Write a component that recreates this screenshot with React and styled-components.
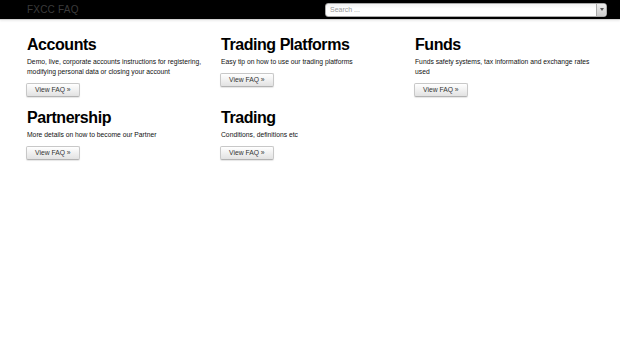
import React from "react";
import styled, { createGlobalStyle } from "styled-components";

const Global = createGlobalStyle`
  html, body { margin: 0; padding: 0; background: #fff; }
  body { font-family: "Liberation Sans", Arial, Helvetica, sans-serif; color: #000; }
`;

const Navbar = styled.div`
  height: 19px;
  background: #000;
  border-bottom: 1px solid #d4d4d4;
  box-shadow: 0 1px 2px rgba(0,0,0,0.08);
  display: flex;
  align-items: center;
  justify-content: space-between;
  padding: 0 13px 0 27px;
`;

const Brand = styled.div`
  font-size: 10px;
  color: #3b3b3b;
  letter-spacing: 0.2px;
`;

const SearchBox = styled.div`
  width: 282px;
  height: 14px;
  box-sizing: border-box;
  background: linear-gradient(#f2f2f2, #fff 40%);
  border: 1px solid #aaa;
  border-radius: 3px;
  display: flex;
  align-items: center;
  justify-content: space-between;
  overflow: hidden;
`;

const Placeholder = styled.span`
  font-size: 7px;
  color: #999;
  padding-left: 4px;
`;

const Arrow = styled.div`
  width: 9px;
  height: 100%;
  background: linear-gradient(#eee, #ccc);
  border-left: 1px solid #aaa;
  display: flex;
  align-items: center;
  justify-content: center;
  &::after {
    content: "";
    border-left: 2px solid transparent;
    border-right: 2px solid transparent;
    border-top: 3px solid #555;
  }
`;

const Container = styled.div`
  padding: 14.5px 0 0 27px;
  display: flex;
  flex-direction: column;
`;

const Row = styled.div`
  display: grid;
  grid-template-columns: repeat(3, 180px);
  column-gap: 14px;
  align-items: start;
`;

const Card = styled.div`
  display: flex;
  flex-direction: column;
  align-items: flex-start;
`;

const Title = styled.h2`
  margin: 0;
  font-size: 16px;
  line-height: 20px;
  font-weight: bold;
  letter-spacing: -0.45px;
`;

const Desc = styled.p`
  margin: 2.5px 0 0;
  font-size: 6.75px;
  line-height: 10px;
  color: #111;
`;

const Button = styled.button`
  margin: 5.5px 0 11px -1px;
  height: 14px;
  padding: 0 8px;
  font-family: inherit;
  font-size: 6.75px;
  color: #333;
  background: linear-gradient(#fff, #e2e2e2);
  border: 1px solid #c8c8c8;
  border-bottom-color: #b3b3b3;
  border-radius: 2px;
  box-shadow: 0 1px 1px rgba(0,0,0,0.1);
`;

const items = [
  [
    { t: "Accounts", d: "Demo, live, corporate accounts instructions for registering, modifying personal data or closing your account" },
    { t: "Trading Platforms", d: "Easy tip on how to use our trading platforms" },
    { t: "Funds", d: "Funds safety systems, tax information and exchange rates used" },
  ],
  [
    { t: "Partnership", d: "More details on how to become our Partner" },
    { t: "Trading", d: "Conditions, definitions etc" },
  ],
];

export default function App() {
  return (
    <>
      <Global />
      <Navbar>
        <Brand>FXCC FAQ</Brand>
        <SearchBox>
          <Placeholder>Search ...</Placeholder>
          <Arrow />
        </SearchBox>
      </Navbar>
      <Container>
        {items.map((row, i) => (
          <Row key={i}>
            {row.map((c) => (
              <Card key={c.t}>
                <Title>{c.t}</Title>
                <Desc>{c.d}</Desc>
                <Button>View FAQ »</Button>
              </Card>
            ))}
          </Row>
        ))}
      </Container>
    </>
  );
}
